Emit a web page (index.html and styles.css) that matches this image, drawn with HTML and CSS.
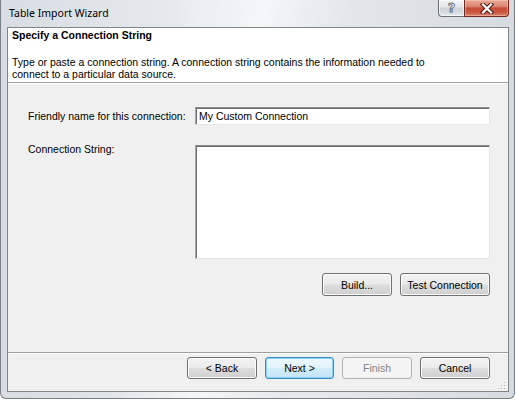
FILE: index.html
```html
<!DOCTYPE html>
<html>
<head>
<meta charset="utf-8">
<link rel="stylesheet" href="styles.css">
</head>
<body>
<div class="window">
  <div class="titlebar">
    <span class="title">Table Import Wizard</span>
    <div class="caption-buttons">
      <div class="cap-btn help"><span class="help-glyph">?</span></div>
      <div class="cap-btn close">
        <svg width="16" height="11" viewBox="0 0 16 11">
          <path d="M4 1.5 L12 9.5 M12 1.5 L4 9.5" stroke="#5a1d14" stroke-width="4.4" stroke-linecap="square" fill="none"/>
          <path d="M4 1.5 L12 9.5 M12 1.5 L4 9.5" stroke="#ffffff" stroke-width="2.2" stroke-linecap="square" fill="none"/>
        </svg>
      </div>
    </div>
  </div>
  <div class="client">
    <div class="header">
      <div class="header-title">Specify a Connection String</div>
      <div class="header-desc">Type or paste a connection string. A connection string contains the information needed to<br>connect to a particular data source.</div>
    </div>
    <div class="content">
      <div class="form">
        <span class="label">Friendly name for this connection:</span>
        <div class="textbox">My Custom Connection</div>
        <span class="label label-top">Connection String:</span>
        <div class="textarea"></div>
      </div>
      <div class="actions">
        <div class="btn btn-build">Build...</div>
        <div class="btn btn-test">Test Connection</div>
      </div>
    </div>
    <div class="footer">
      <div class="btn btn-back">&lt; Back</div>
      <div class="btn btn-next btn-default">Next &gt;</div>
      <div class="btn btn-finish btn-disabled">Finish</div>
      <div class="btn btn-cancel">Cancel</div>
      <svg class="grip" width="8" height="8" viewBox="0 0 8 8">
        <rect x="6" y="0" width="1" height="1" fill="#b8b8b8"/>
        <rect x="3" y="3" width="1" height="1" fill="#b8b8b8"/>
        <rect x="6" y="3" width="1" height="1" fill="#b8b8b8"/>
        <rect x="0" y="6" width="1" height="1" fill="#b8b8b8"/>
        <rect x="3" y="6" width="1" height="1" fill="#b8b8b8"/>
        <rect x="6" y="6" width="1" height="1" fill="#b8b8b8"/>
      </svg>
    </div>
  </div>
</div>
</body>
</html>
```

FILE: styles.css
```css
html, body {
  margin: 0;
  padding: 0;
}
body {
  width: 516px;
  height: 400px;
  overflow: hidden;
  background: #ffffff;
  font-family: "Liberation Sans", Arial, sans-serif;
  font-size: 10.5px;
  color: #000;
}
.window {
  box-sizing: border-box;
  width: 515px;
  height: 399px;
  border: 1px solid #7a7f85;
  border-top: none;
  border-radius: 0 0 6px 6px;
  padding: 0 5px 6px 6px;
  background:
    linear-gradient(100deg, rgba(255,255,255,0) 30%, rgba(255,255,255,0.55) 45%, rgba(255,255,255,0) 60%),
    linear-gradient(to right, #d8dde3, #e8ecf0 40%, #e2e6ea 70%, #d6dbe1);
  display: flex;
  flex-direction: column;
}
.titlebar {
  height: 27px;
  display: flex;
  align-items: flex-start;
}
.title {
  font-family: "Noto Sans", "Open Sans", sans-serif;
  font-size: 10.5px;
  line-height: 27px;
  margin-left: 2px;
  color: #000;
}
.caption-buttons {
  margin-left: auto;
  display: flex;
}
.cap-btn {
  box-sizing: border-box;
  height: 17px;
  display: flex;
  align-items: center;
  justify-content: center;
}
.help {
  width: 26px;
  border: 1px solid #6c7177;
  border-top: none;
  border-right: none;
  border-radius: 0 0 0 4px;
  background: linear-gradient(#f4f5f7, #e3e6ea 45%, #cfd4da 50%, #d8dde3 80%, #e6eaee);
  box-shadow: inset 0 0 0 1px rgba(255,255,255,0.6);
}
.help-glyph {
  font-family: "DejaVu Sans", sans-serif;
  font-weight: bold;
  font-size: 13px;
  line-height: 14px;
  color: #eef0f2;
  -webkit-text-stroke: 0.8px #62676d;
}
.close {
  width: 45px;
  border: 1px solid #6e2a1f;
  border-top: none;
  border-radius: 0 0 4px 0;
  background: linear-gradient(#e8a797, #dc8775 40%, #c64e38 50%, #c9543e 75%, #dc8471);
  box-shadow: inset 0 0 0 1px rgba(255,210,200,0.45);
}
.close svg {
  display: block;
}
.client {
  box-sizing: border-box;
  height: 365px;
  border: 1px solid #808589;
  background: #f0f0f0;
  display: flex;
  flex-direction: column;
}
.header {
  background: #ffffff;
  height: 55px;
  box-sizing: border-box;
  border-bottom: 1px solid #a0a0a0;
  padding: 1px 4px 0 4px;
}
.header-title {
  font-weight: bold;
  line-height: 13px;
}
.header-desc {
  margin-top: 14px;
  line-height: 12px;
}
.content {
  flex: 1;
  border-top: 1px solid #ffffff;
  padding: 23px 18px 0 20px;
  display: flex;
  flex-direction: column;
}
.form {
  display: grid;
  grid-template-columns: 167px 295px;
  row-gap: 20px;
  align-items: center;
}
.label {
  line-height: 12px;
}
.label-top {
  align-self: start;
  margin-top: -2px;
}
.textbox, .textarea {
  box-sizing: border-box;
  background: #ffffff;
  border: 1px solid;
  border-color: #8a8a8a #e6e6e6 #e6e6e6 #a8a8a8;
  box-shadow: inset 1px 1px 0 #6e6e6e;
}
.textbox {
  height: 18px;
  line-height: 16px;
  padding-left: 3px;
}
.textarea {
  height: 114px;
}
.actions {
  margin-top: 14px;
  display: flex;
  justify-content: flex-end;
  gap: 8px;
}
.btn {
  box-sizing: border-box;
  height: 22px;
  border: 1px solid #707070;
  border-radius: 3px;
  background: linear-gradient(#f2f2f2 0%, #ebebeb 48%, #dddddd 52%, #cfcfcf 100%);
  box-shadow: inset 0 0 0 1px #fbfbfb;
  display: flex;
  align-items: center;
  justify-content: center;
  line-height: 12px;
}
.btn-build { width: 70px; height: 23px; }
.btn-test { width: 90px; height: 23px; }
.btn-back { width: 70px; }
.btn-next { width: 69px; }
.btn-finish { width: 70px; }
.btn-cancel { width: 70px; }
.btn-default {
  border-color: #3c8dc4;
  background: linear-gradient(#eef8fe 0%, #e2f3fc 48%, #d2ecfa 52%, #c4e5f7 100%);
  box-shadow: inset 0 0 0 1px #86d1f4;
}
.btn-disabled {
  border-color: #adb2b5;
  background: #f4f4f4;
  box-shadow: none;
  color: #838383;
}
.footer {
  position: relative;
  height: 39px;
  box-sizing: border-box;
  border-top: 1px solid #a0a0a0;
  box-shadow: inset 0 1px 0 #ffffff;
  padding: 4px 18px 0 0;
  display: flex;
  justify-content: flex-end;
  align-items: flex-start;
  gap: 8px;
}
.grip {
  position: absolute;
  right: 2px;
  bottom: 1px;
}
```
